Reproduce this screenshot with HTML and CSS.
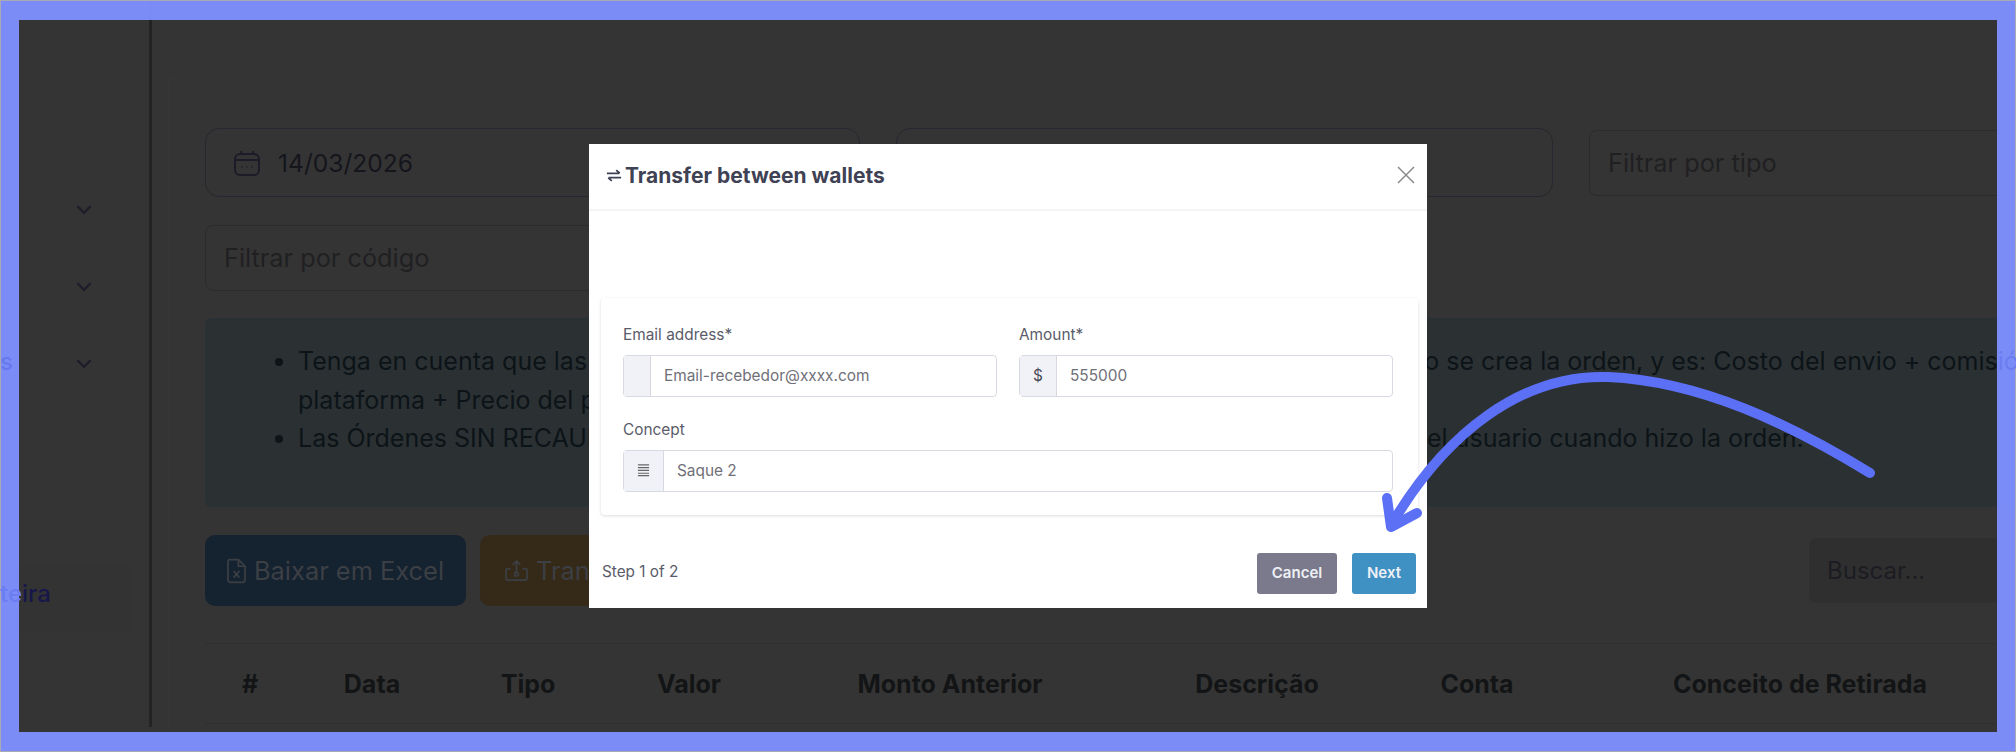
FILE: index.html
```html
<!DOCTYPE html>
<html lang="pt">

<head>
    <meta charset="UTF-8">
    <meta name="viewport" content="width=device-width, initial-scale=1.0">
    <title>Transfer between wallets</title>
    <link rel="stylesheet" href="styles.css">
</head>

<body>
    <div class="page">
        <aside class="sidebar">
            <div class="side-row">
                <svg class="chevron" viewBox="0 0 16 10"><path d="M2 2l6 6 6-6"/></svg>
            </div>
            <div class="side-row">
                <svg class="chevron" viewBox="0 0 16 10"><path d="M2 2l6 6 6-6"/></svg>
            </div>
            <div class="side-row">
                <span class="side-text tinted">s</span>
                <svg class="chevron" viewBox="0 0 16 10"><path d="M2 2l6 6 6-6"/></svg>
            </div>
            <div class="side-active">
                <span class="side-text"><span class="tinted">te</span>ira</span>
            </div>
        </aside>

        <main class="main">
            <section class="panel">
                <div class="filters">
                    <div class="date-field">
                        <svg class="calendar" viewBox="0 0 28 26">
                            <rect x="2" y="4" width="24" height="21" rx="5"/>
                            <path d="M2 10h24M8 1v4M20 1v4"/>
                            <path class="dots" d="M8.500 17h1M13.500 17h1M18.500 17h1"/>
                        </svg>
                        <span>14/03/2026</span>
                    </div>
                    <div class="date-field"></div>
                    <div class="select-field select-low">Filtrar por tipo</div>
                    <div class="select-field">Filtrar por código</div>
                </div>

                <div class="alert">
                    <ul>
                        <li>Tenga en cuenta que las comisiones de cada producto se aplican en el momento en que el envío se crea la orden, y es: Costo del envio + comis<span class="tinted">ión</span> de la<br>plataforma + Precio del proveedor</li>
                        <li>Las Órdenes SIN RECAUDO no generan ganancia para el vendedor, solo el valor ya pagado por el usuario cuando hizo la orden.</li>
                    </ul>
                </div>

                <div class="toolbar">
                    <div class="actions">
                        <button class="btn btn-excel">
                            <svg class="btn-icon" viewBox="0 0 20 26">
                                <path d="M3 1h9l7 7v14a3 3 0 0 1-3 3H4a3 3 0 0 1-3-3V3a2 2 0 0 1 2-2z"/>
                                <path d="M12 1v7h7M7 13l6 7M13 13l-6 7"/>
                            </svg>
                            Baixar em Excel
                        </button>
                        <button class="btn btn-transfer">
                            <svg class="btn-icon btn-icon-wide" viewBox="0 0 24 22">
                                <path d="M6 9H3a2 2 0 0 0-2 2v8a2 2 0 0 0 2 2h18a2 2 0 0 0 2-2v-8a2 2 0 0 0-2-2h-3"/>
                                <path d="M12 13V2M8 5l4-4 4 4"/>
                                <circle cx="12" cy="15" r="2"/>
                            </svg>
                            Transferir
                        </button>
                    </div>
                    <div class="search">Buscar...</div>
                </div>

                <div class="table-head">
                    <div>#</div>
                    <div>Data</div>
                    <div>Tipo</div>
                    <div>Valor</div>
                    <div>Monto Anterior</div>
                    <div>Descrição</div>
                    <div>Conta</div>
                    <div>Conceito de Retirada</div>
                </div>
            </section>
        </main>

        <div class="frame"></div>

        <div class="modal">
            <div class="modal-header">
                <h2 class="modal-title">
                    <svg class="swap" viewBox="0 0 18 14">
                        <path d="M1 4.500h14M11.500 1l4 3.500M17 9.500H3M6.500 13l-4-3.500"/>
                    </svg>
                    Transfer between wallets
                </h2>
                <svg class="close" viewBox="0 0 18 18"><path d="M1 1l16 16M17 1L1 17"/></svg>
            </div>

            <div class="modal-body">
                <div class="form-card">
                    <div class="form-row">
                        <div class="form-group">
                            <label>Email address*</label>
                            <div class="input-group">
                                <span class="addon addon-mail"></span>
                                <span class="input">Email-recebedor@xxxx.com</span>
                            </div>
                        </div>
                        <div class="form-group">
                            <label>Amount*</label>
                            <div class="input-group">
                                <span class="addon addon-money">$</span>
                                <span class="input">555000</span>
                            </div>
                        </div>
                    </div>
                    <div class="form-group">
                        <label>Concept</label>
                        <div class="input-group">
                            <span class="addon addon-lines">
                                <svg class="lines" viewBox="0 0 14 14"><path d="M1 1.500h12M1 4.500h12M1 7.500h12M1 10.500h12M1 13h12"/></svg>
                            </span>
                            <span class="input">Saque 2</span>
                        </div>
                    </div>
                </div>
            </div>

            <div class="modal-footer">
                <span class="step">Step 1 of 2</span>
                <div class="footer-btns">
                    <button class="modal-btn btn-cancel">Cancel</button>
                    <button class="modal-btn btn-next">Next</button>
                </div>
            </div>
        </div>

        <!-- flecha sobre el modal -->
        <svg class="arrow" viewBox="0 0 2016 752">
            <path d="M1870 473C1790 424 1700 381 1608 377C1520 374 1445 435 1393 522"/>
            <path d="M1387 498L1391 527L1417 513"/>
        </svg>
    </div>
</body>

</html>
```

FILE: styles.css
```css
* {
    box-sizing: border-box;
}

body {
    margin: 0;
    background: #343434;
    font-family: "Inter", "Liberation Sans", sans-serif;
}

.page {
    position: relative;
    display: flex;
    width: 2016px;
    height: 752px;
    overflow: hidden;
}

/* sidebar */
.sidebar {
    flex: none;
    width: 152px;
    height: 727px;
    padding-top: 171px;
    border-right: 3px solid #232323;
}

.side-row {
    position: relative;
    display: flex;
    align-items: center;
    height: 77px;
    padding-left: 75px;
}

.side-row .side-text {
    position: absolute;
    left: 0;
    margin-top: -4px;
    color: #6679ee;
}

.chevron {
    width: 18px;
    height: 11px;
    fill: none;
    stroke: #1e1e2a;
    stroke-width: 2.200;
}

.side-active {
    display: flex;
    align-items: center;
    width: 130px;
    height: 71px;
    margin-top: 160px;
    padding-bottom: 8px;
    background: #333333;
}

.side-text {
    font-size: 24px;
    font-weight: 500;
    color: #17174a;
}

.tinted {
    position: relative;
    z-index: 3;
    color: #6b7df0;
}

/* main */
.main {
    flex: none;
    width: 1864px;
    padding: 78px 0 0 16px;
}

.panel {
    width: 2200px;
    height: 660px;
    padding: 49px 0 0 36px;
    border-top: 1px solid #363636;
    border-left: 1px solid #363636;
}

.filters {
    display: grid;
    grid-template-columns: 655px 657px 656px;
    gap: 28px 36px;
    width: 2040px;
}

.date-field {
    display: flex;
    align-items: center;
    gap: 17px;
    height: 69px;
    padding-left: 27px;
    border: 1px solid #27272f;
    border-radius: 14px;
    font-size: 24.600px;
    color: #15151c;
}

.calendar {
    width: 28px;
    height: 26px;
    fill: none;
    stroke: #1c1c28;
    stroke-width: 2;
}

.select-field {
    display: flex;
    align-items: center;
    height: 66px;
    padding: 0 0 2px 18px;
    border: 1px solid #2b2b2f;
    border-radius: 8px;
    font-size: 25.300px;
    color: #202022;
}

.select-low {
    margin-top: 2px;
}

.alert {
    width: 2040px;
    height: 189px;
    margin-top: 27px;
    padding: 23px 0 0 52px;
    background: #2b3033;
    border: 1px solid #283236;
    border-radius: 6px;
    font-size: 25px;
    line-height: 38.500px;
    color: #0c1418;
}

.alert ul {
    margin: 0;
    padding: 0 0 0 40px;
    white-space: nowrap;
}

.toolbar {
    display: flex;
    justify-content: space-between;
    width: 2040px;
    margin-top: 28px;
}

.actions {
    display: flex;
    gap: 14px;
}

.btn {
    display: flex;
    align-items: center;
    gap: 8px;
    height: 71px;
    padding: 0 22px;
    border: 0;
    border-radius: 10px;
    font-family: inherit;
    font-size: 25.400px;
    color: #3c3f44;
    white-space: nowrap;
}

.btn-excel {
    width: 261px;
    background: #152230;
}

.btn-transfer {
    width: 260px;
    padding-left: 25px;
    background: #352918;
}

.btn-icon {
    flex: none;
    width: 19px;
    height: 26px;
    fill: none;
    stroke: currentColor;
    stroke-width: 1.800;
}

.btn-icon-wide {
    width: 23px;
    height: 21px;
}

.search {
    display: flex;
    align-items: center;
    width: 436px;
    height: 65px;
    margin-top: 3px;
    padding-left: 18px;
    background: #2f2f2f;
    border-radius: 8px;
    font-size: 24px;
    color: #1c1c22;
}

.table-head {
    display: grid;
    grid-template-columns: 90px 154px 158px 164px 358px 256px 184px 462px;
    align-items: center;
    width: 1826px;
    height: 81px;
    margin-top: 37px;
    border-top: 1px solid #2f2f2f;
    border-bottom: 1px solid #2f2f2f;
    font-size: 25px;
    font-weight: 700;
    color: #131416;
    text-align: center;
}

/* borde de la captura */
.frame {
    position: absolute;
    inset: 0;
    z-index: 2;
    border-style: solid;
    border-width: 20px 19px;
    border-color: rgba(126, 144, 255, 0.96);
    outline: 1px solid #a9a9b6;
    outline-offset: -1px;
}

/* modal */
.modal {
    position: absolute;
    top: 144px;
    left: 589px;
    z-index: 4;
    width: 838px;
    height: 464px;
    background: #fff;
    color: #5a5c69;
}

.modal-header {
    display: flex;
    justify-content: space-between;
    align-items: center;
    height: 67px;
    padding: 0 12px 3px 17px;
    border-bottom: 2px solid #f4f4f7;
}

.modal-title {
    display: flex;
    align-items: center;
    gap: 3px;
    margin: 0;
    font-size: 21px;
    font-weight: 700;
    color: #3f4254;
}

.swap {
    width: 16px;
    height: 13px;
    fill: none;
    stroke: #3f4254;
    stroke-width: 2;
}

.close {
    width: 18px;
    height: 18px;
    fill: none;
    stroke: #8a8a8a;
    stroke-width: 1.500;
}

.modal-body {
    padding: 87px 9px 0 12px;
}

.form-card {
    height: 217px;
    padding: 28px 25px 0 22px;
    border-radius: 4px;
    box-shadow: 0 1px 3px rgba(60, 60, 80, 0.18);
}

.form-row {
    display: grid;
    grid-template-columns: 374px 374px;
    gap: 22px;
    margin-bottom: 24px;
}

.form-group label {
    display: block;
    height: 29px;
    font-size: 15.400px;
    line-height: 18px;
    color: #5a5c69;
}

.input-group {
    display: flex;
    height: 42px;
    padding-bottom: 2px;
    border: 1px solid #d8d9e0;
    border-radius: 4px;
    font-size: 15.400px;
    color: #6f7078;
}

.addon {
    display: flex;
    flex: none;
    justify-content: center;
    align-items: center;
    margin-bottom: -2px;
    padding-bottom: 2px;
    background: #f1f2f7;
    border-right: 1px solid #d8d9e0;
    color: #4a4a55;
}

.addon-mail {
    width: 27px;
}

.addon-money {
    width: 37px;
}

.addon-lines {
    width: 40px;
}

.lines {
    width: 13px;
    height: 14px;
    fill: none;
    stroke: #666;
    stroke-width: 1.300;
}

.input {
    display: flex;
    align-items: center;
    padding-left: 13px;
}

.modal-footer {
    display: flex;
    justify-content: space-between;
    align-items: center;
    margin-top: 38px;
    padding: 0 11px 0 13px;
}

.step {
    margin-top: -4px;
    font-size: 15.300px;
    color: #5a5c69;
}

.footer-btns {
    display: flex;
    gap: 15px;
}

.modal-btn {
    height: 41px;
    padding: 0 0 2px;
    border: 0;
    border-radius: 3px;
    font-family: inherit;
    font-size: 15px;
    font-weight: 600;
    color: #eef0f5;
}

.btn-cancel {
    width: 80px;
    background: #7a7a8c;
}

.btn-next {
    width: 64px;
    background: #4091c3;
}

.arrow {
    position: absolute;
    inset: 0;
    z-index: 5;
    width: 2016px;
    height: 752px;
    fill: none;
    stroke: #5b70f5;
    stroke-width: 10;
    stroke-linecap: round;
    stroke-linejoin: round;
}
```
